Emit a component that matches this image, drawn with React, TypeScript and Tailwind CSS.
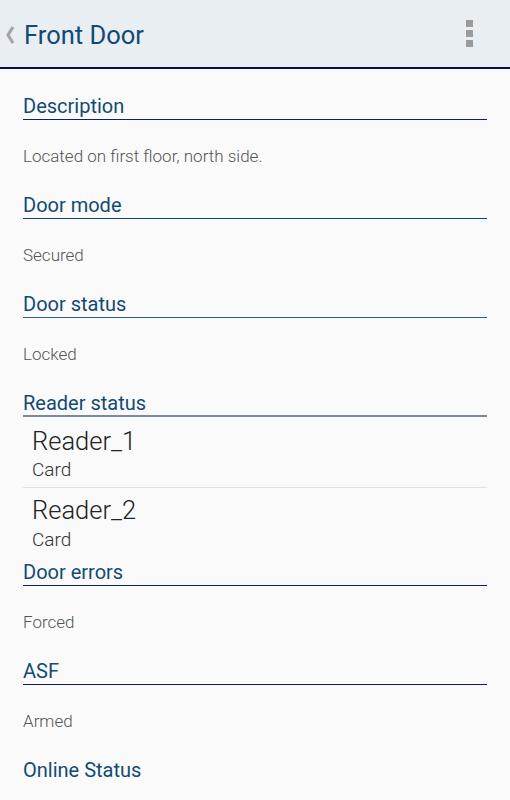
// Door detail screen: app bar with back chevron + overflow menu,
// followed by labelled sections (heading with rule, value below).

import React from 'react';

type Section = { title: string; value?: string; rule: string };

const SECTIONS: Section[] = [
  { title: 'Description', value: 'Located on first floor, north side.', rule: 'border-[#0c2456]' },
  { title: 'Door mode', value: 'Secured', rule: 'border-[#0f4878]' },
  { title: 'Door status', value: 'Locked', rule: 'border-[#2f5f82]' },
];

const READERS = [
  { name: 'Reader_1', type: 'Card' },
  { name: 'Reader_2', type: 'Card' },
];

const FONT = "font-['Roboto','Liberation_Sans',sans-serif]";

function Heading({ title, rule }: { title: string; rule?: string }) {
  return (
    <div className={rule ? `mx-[23px] h-[30px] border-b ${rule}` : 'mx-[23px] h-[30px]'}>
      <div className="pt-[5px] text-[20px] font-normal leading-[22px] text-[#124a74]">{title}</div>
    </div>
  );
}

function Value({ text }: { text: string }) {
  return <div className="mx-[23px] h-[69px] pt-[26px] text-[17px] font-light leading-[20px] text-[#555]">{text}</div>;
}

function AppBar() {
  return (
    <header className="flex h-[69px] items-center border-b-2 border-[#0a0a5e] bg-[#e9eef3]">
      <svg width="12" height="20" viewBox="0 0 12 20" className="ml-[4px] mt-[2px]">
        <path d="M9 2 L4 10 L9 18" fill="none" stroke="#a3a6a8" strokeWidth="3.2" strokeLinejoin="miter" />
      </svg>
      <h1 className="ml-[8px] mt-[4px] text-[25.5px] font-normal leading-none text-[#124a74]">Front Door</h1>
      <div className="ml-auto mr-[37px] flex flex-col gap-[3px]">
        <span className="block h-[7px] w-[7px] bg-[#9b9b9b]" />
        <span className="block h-[7px] w-[7px] bg-[#9b9b9b]" />
        <span className="block h-[7px] w-[7px] bg-[#9b9b9b]" />
      </div>
    </header>
  );
}

export default function App() {
  return (
    <div className={`h-[800px] w-[510px] overflow-hidden bg-[#fafafa] ${FONT}`}>
      <AppBar />
      <div className="pt-[21px]">
        {SECTIONS.map((s) => (
          <div key={s.title}>
            <Heading title={s.title} rule={s.rule} />
            <Value text={s.value || ''} />
          </div>
        ))}

        <Heading title="Reader status" rule="border-[#7a8a99] border-b-[2px]" />
        <div className="mx-[23px]">
          <div className="h-[71px] border-b border-[#e2e2e2] pl-[9px]">
            <div className="pt-[10px] text-[25.5px] font-light leading-[28px] text-[#222]">{READERS[0].name}</div>
            <div className="pt-[5px] text-[19px] font-light leading-[20px] text-[#333]">{READERS[0].type}</div>
          </div>
          <div className="h-[68px] pl-[9px]">
            <div className="pt-[8px] text-[25.5px] font-light leading-[28px] text-[#222]">{READERS[1].name}</div>
            <div className="pt-[6px] text-[19px] font-light leading-[20px] text-[#333]">{READERS[1].type}</div>
          </div>
        </div>

        <Heading title="Door errors" rule="border-[#0c2456]" />
        <Value text="Forced" />
        <Heading title="ASF" rule="border-[#0a1a6a]" />
        <Value text="Armed" />
        <Heading title="Online Status" />
      </div>
    </div>
  );
}
